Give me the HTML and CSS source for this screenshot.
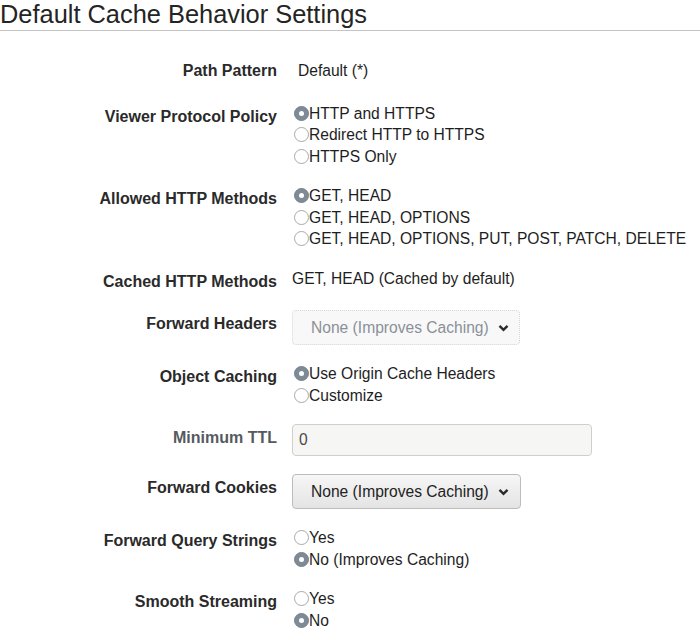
FILE: index.html
```html
<!DOCTYPE html>
<html lang="en">
<head>
<meta charset="utf-8">
<title>Default Cache Behavior Settings</title>
<link rel="stylesheet" href="styles.css">
</head>
<body>
<h1 class="title">Default Cache Behavior Settings</h1>
<div class="form">
  <div class="label">Path Pattern</div>
  <div class="value value-static">Default (*)</div>

  <div class="label">Viewer Protocol Policy</div>
  <div class="value">
    <div class="option"><span class="radio checked"></span>HTTP and HTTPS</div>
    <div class="option"><span class="radio"></span>Redirect HTTP to HTTPS</div>
    <div class="option"><span class="radio"></span>HTTPS Only</div>
  </div>

  <div class="label">Allowed HTTP Methods</div>
  <div class="value">
    <div class="option"><span class="radio checked"></span>GET, HEAD</div>
    <div class="option"><span class="radio"></span>GET, HEAD, OPTIONS</div>
    <div class="option"><span class="radio"></span>GET, HEAD, OPTIONS, PUT, POST, PATCH, DELETE</div>
  </div>

  <div class="label">Cached HTTP Methods</div>
  <div class="value">GET, HEAD (Cached by default)</div>

  <div class="label">Forward Headers</div>
  <div class="value">
    <div class="select select-disabled">None (Improves Caching)<svg class="chev" width="11" height="8" viewBox="0 0 11 8"><polyline points="1.5,1.8 5.5,5.8 9.5,1.8" fill="none" stroke="#2b2b2b" stroke-width="2.4"/></svg></div>
  </div>

  <div class="label">Object Caching</div>
  <div class="value">
    <div class="option"><span class="radio checked"></span>Use Origin Cache Headers</div>
    <div class="option"><span class="radio"></span>Customize</div>
  </div>

  <div class="label label-muted">Minimum TTL</div>
  <div class="value">
    <div class="input">0</div>
  </div>

  <div class="label">Forward Cookies</div>
  <div class="value">
    <div class="select">None (Improves Caching)<svg class="chev" width="11" height="8" viewBox="0 0 11 8"><polyline points="1.5,1.8 5.5,5.8 9.5,1.8" fill="none" stroke="#2b2b2b" stroke-width="2.4"/></svg></div>
  </div>

  <div class="label">Forward Query Strings</div>
  <div class="value">
    <div class="option"><span class="radio"></span>Yes</div>
    <div class="option"><span class="radio checked"></span>No (Improves Caching)</div>
  </div>

  <div class="label">Smooth Streaming</div>
  <div class="value">
    <div class="option"><span class="radio"></span>Yes</div>
    <div class="option"><span class="radio checked"></span>No</div>
  </div>
</div>
</body>
</html>
```

FILE: styles.css
```css
html, body {
  margin: 0;
  padding: 0;
  background: #ffffff;
}

body {
  font-family: "Liberation Sans", Arial, Helvetica, sans-serif;
  color: #222222;
  width: 700px;
  height: 628px;
  overflow: hidden;
}

.title {
  margin: 0;
  font-size: 25.4px;
  font-weight: normal;
  line-height: 29px;
  padding-bottom: 1px;
  border-bottom: 1px solid #c4c4c4;
  color: #242424;
}

.form {
  display: grid;
  grid-template-columns: 277px 1fr;
  column-gap: 15px;
  row-gap: 18px;
  margin-top: 26px;
}

.form > .label:first-child {
  margin-bottom: 3px;
}

.label {
  text-align: right;
  font-weight: bold;
  font-size: 16px;
  line-height: 21.5px;
  padding-top: 3px;
  color: #2a2a2a;
  white-space: nowrap;
}

.label-muted {
  color: #555a60;
}

.value {
  font-size: 15.6px;
  line-height: 21.5px;
  color: #1e1e1e;
  white-space: nowrap;
}

.value-static {
  padding-top: 3px;
  padding-left: 6px;
}

.option {
  display: flex;
  align-items: center;
  height: 21.5px;
}

.radio {
  box-sizing: border-box;
  width: 15px;
  height: 15px;
  border-radius: 50%;
  border: 1px solid #a9a9a9;
  background: #ffffff;
  margin-left: 2px;
  margin-right: 0;
  flex: none;
  position: relative;
}

.radio.checked {
  border-color: #77828f;
  background: #7f8a97;
}

.radio.checked::after {
  content: "";
  position: absolute;
  left: 50%;
  top: 50%;
  width: 5px;
  height: 5px;
  margin: -2.5px 0 0 -2.5px;
  border-radius: 50%;
  background: #ffffff;
}

.select {
  box-sizing: border-box;
  display: flex;
  align-items: center;
  height: 35px;
  width: 229px;
  padding-left: 18px;
  border: 1px solid #bcbcbc;
  border-radius: 4px;
  background: linear-gradient(#f6f6f6, #e4e4e4);
  color: #222222;
}

.select-disabled {
  width: 228px;
  border: 1px dotted #d6d6d6;
  background: #f8f8f8;
  color: #8b9099;
}

.chev {
  margin-left: 9px;
  margin-top: 1px;
}

.input {
  box-sizing: border-box;
  width: 300px;
  height: 32px;
  padding-left: 6px;
  display: flex;
  align-items: center;
  border: 1px solid #cfcfcf;
  border-radius: 4px;
  background: #f6f6f4;
  color: #4a4a4a;
}
```
